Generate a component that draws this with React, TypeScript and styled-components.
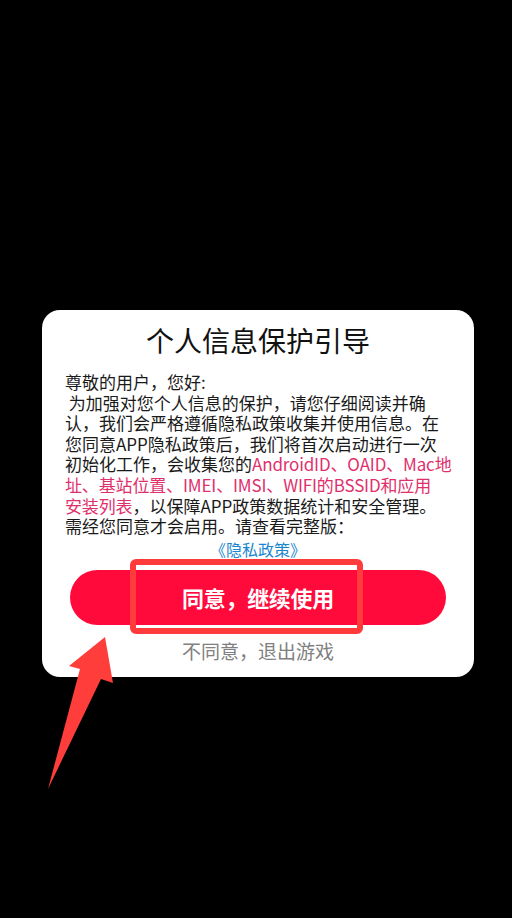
import styled, { createGlobalStyle } from 'styled-components'

const GlobalStyle = createGlobalStyle`
  html, body {
    margin: 0;
    padding: 0;
    background: #000;
  }
  body {
    font-family: "Noto Sans CJK SC", "Noto Sans", sans-serif;
  }
`

const Screen = styled.div`
  position: relative;
  width: 512px;
  height: 918px;
  background: #000;
  overflow: hidden;
  padding-top: 310px;
  padding-left: 42px;
  box-sizing: border-box;
`

const Card = styled.div`
  width: 432px;
  background: #fff;
  border-radius: 18px;
  padding: 12px 0 13px;
  box-sizing: border-box;
  display: flex;
  flex-direction: column;
  align-items: center;
`

const Title = styled.h1`
  margin: 0;
  font-size: 28px;
  line-height: 36px;
  font-weight: 400;
  color: #111;
`

const Body = styled.div`
  align-self: stretch;
  margin-top: 14px;
  padding-left: 23px;
  font-size: 17px;
  line-height: 20.6px;
  color: #1a1a1a;
`

const Line = styled.div`
  white-space: nowrap;
`

const Mark = styled.span`
  color: #e0306c;
  letter-spacing: -0.15px;
`

const PolicyLink = styled.a`
  margin-top: 1px;
  font-size: 16px;
  line-height: 22px;
  color: #1a86d0;
  text-decoration: none;
`

const AgreeButton = styled.button`
  margin-top: 10px;
  width: 376px;
  height: 55px;
  border: none;
  border-radius: 28px;
  background: #ff0a3b;
  color: #fff;
  font-family: inherit;
  font-size: 22px;
  font-weight: 700;
  letter-spacing: -0.3px;
  cursor: pointer;
`

const Decline = styled.div`
  margin-top: 13px;
  font-size: 19px;
  line-height: 26px;
  color: #808080;
`

const Highlight = styled.div`
  position: absolute;
  left: 130px;
  top: 559px;
  width: 233px;
  height: 75px;
  border: 6px solid #ff3b3b;
  border-radius: 6px;
  box-sizing: border-box;
  pointer-events: none;
`

const Arrow = styled.svg`
  position: absolute;
  left: 0;
  top: 0;
  pointer-events: none;
`

export default function App() {
  return (
    <>
      <GlobalStyle />
      <Screen>
        <Card>
          <Title>个人信息保护引导</Title>
          <Body>
            <Line>尊敬的用户，您好:</Line>
            <Line>&nbsp;为加强对您个人信息的保护，请您仔细阅读并确</Line>
            <Line>认，我们会严格遵循隐私政策收集并使用信息。在</Line>
            <Line>您同意APP隐私政策后，我们将首次启动进行一次</Line>
            <Line>
              初始化工作，会收集您的<Mark>AndroidID、OAID、Mac地</Mark>
            </Line>
            <Line>
              <Mark>址、基站位置、IMEI、IMSI、WIFI的BSSID和应用</Mark>
            </Line>
            <Line>
              <Mark>安装列表</Mark>，以保障APP政策数据统计和安全管理。
            </Line>
            <Line>需经您同意才会启用。请查看完整版：</Line>
          </Body>
          <PolicyLink href="#">《隐私政策》</PolicyLink>
          <AgreeButton>同意，继续使用</AgreeButton>
          <Decline>不同意，退出游戏</Decline>
        </Card>
        <Highlight />
        <Arrow width="512" height="918" viewBox="0 0 512 918">
          <polygon
            points="105,637 113,683 101,679 48,789 80,669 69,666"
            fill="#ff3d3a"
          />
        </Arrow>
      </Screen>
    </>
  )
}
